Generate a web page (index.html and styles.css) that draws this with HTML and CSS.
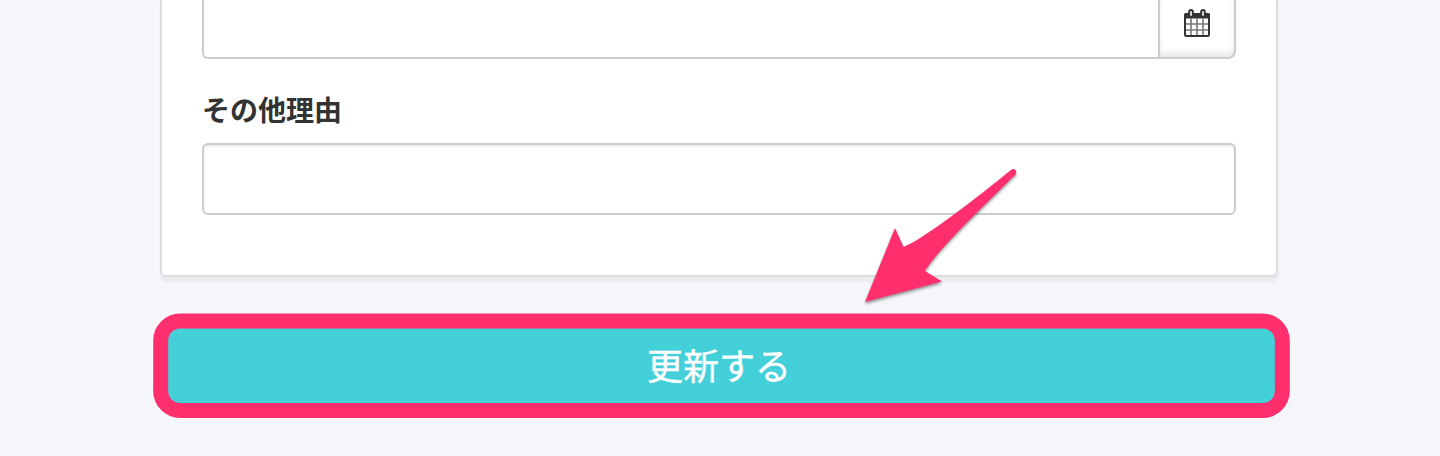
FILE: index.html
```html
<!DOCTYPE html>
<html lang="ja">
<head>
<meta charset="utf-8">
<title>更新</title>
<link rel="stylesheet" href="styles.css">
</head>
<body>
<main class="page">
  <form class="form">
    <section class="card">
      <div class="input-group">
        <div class="field field-date"></div>
        <div class="addon">
          <svg class="calendar" width="26" height="30" viewBox="0 0 26 30">
            <rect x="1" y="5" width="24" height="22" rx="1.5" fill="#fff" stroke="#333" stroke-width="2"/>
            <path d="M0 9.500V6Q0 4 2 4H24Q26 4 26 6V9.500Z" fill="#333"/>
            <path d="M7 9.500V26M13 9.500V26M19 9.500V26M2 15H24M2 21H24" stroke="#777" stroke-width="1.6" fill="none"/>
            <rect x="5.200" y="1" width="3.600" height="7" rx="1.800" fill="#fff" stroke="#333" stroke-width="2"/>
            <rect x="17.200" y="1" width="3.600" height="7" rx="1.800" fill="#fff" stroke="#333" stroke-width="2"/>
          </svg>
        </div>
      </div>
      <div class="label">その他理由</div>
      <div class="field field-reason"></div>
    </section>
    <div class="submit">更新する</div>
  </form>
  <svg class="highlight" width="1140" height="108" viewBox="152 312 1140 108">
    <rect x="160.700" y="321" width="1121.600" height="89.500" rx="19.500" fill="none" stroke="#ff2f6d" stroke-width="15"/>
  </svg>
  <svg class="arrow" width="170" height="150" viewBox="855 160 170 150">
    <path d="M865 302L895 228L903.500 247C924 239 979 196 1011 170C1015 167 1018 172 1015 175C989 201 938 249 925 271L942 281.500Z" fill="#ff2f6d"/>
  </svg>
</main>
</body>
</html>
```
FILE: styles.css
```css
* { box-sizing: border-box; }
body {
  margin: 0;
  background: #f4f6fa;
  color: #333;
  font-family: "Noto Sans CJK JP", sans-serif;
}
.page {
  position: relative;
  height: 456px;
  overflow: hidden;
}
.form {
  width: 1118px;
  margin-left: 160px;
}
.card {
  height: 277px;
  padding: 0 40px;
  background: #fff;
  border: 2px solid #dcdddf;
  border-top: 0;
  border-radius: 0 0 6px 6px;
  box-shadow: 0 5px 2px #e9ebef;
}
.input-group {
  display: flex;
  height: 59px;
}
.field {
  background: #fff;
  border: 2px solid #ccc;
  border-radius: 6px;
}
.field-date {
  flex: 1;
  border-width: 0 0 2px 2px;
  border-radius: 0 0 0 6px;
}
.addon {
  width: 78px;
  padding: 9px 0 0 24px;
  border: 2px solid #ccc;
  border-top: 0;
  border-radius: 0 0 8px 0;
  box-shadow: inset 0 -5px 6px -1px #e6e6e6;
}
.calendar { display: block; }
.label {
  height: 84px;
  padding-top: 30px;
  font-size: 28px;
  font-weight: 700;
  line-height: 40px;
}
.field-reason {
  height: 72px;
  box-shadow: inset 0 2px 2px rgba(0, 0, 0, 0.075);
}
.submit {
  height: 80px;
  margin-top: 49px;
  background: #44d0d8;
  border-radius: 8px;
  color: #fff;
  font-size: 36px;
  line-height: 76px;
  text-align: center;
  -webkit-text-stroke: 0.4px #fff;
}
.highlight {
  position: absolute;
  top: 312px;
  left: 152px;
}
.arrow {
  position: absolute;
  top: 160px;
  left: 855px;
  filter: drop-shadow(0 2px 1.500px rgba(0, 0, 0, 0.4));
}
```
